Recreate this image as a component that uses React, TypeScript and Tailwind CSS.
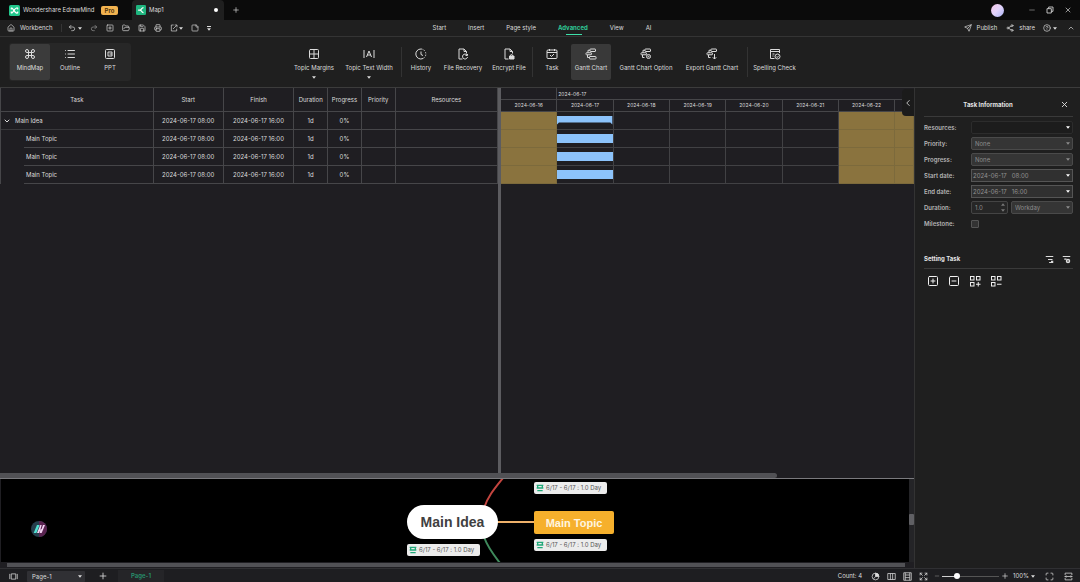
import { useState } from "react";
import type { ReactNode } from "react";
import {
    ChevronDown, ChevronLeft, ChevronUp, CircleHelp, Expand,
    FolderOpen, Grid2x2, Home, List, Maximize, Minus, Plus, Printer,
    Redo2, Save, Send, Share2, SquarePlus, SquareMinus, StickyNote,
    Undo2, X, Command,
} from "lucide-react";

const Caret = ({ className = "" }: { className?: string }) => (
    <svg viewBox="0 0 6 4" className={`h-[3px] w-1 shrink-0 ${className}`} aria-hidden="true">
        <path d="M0 0h6L3 4z" fill="currentColor" />
    </svg>
);

const Glyph = ({ children, className = "size-3" }: { children: ReactNode; className?: string }) => (
    <svg viewBox="0 0 24 24" className={`shrink-0 ${className}`} fill="none" stroke="currentColor" strokeWidth="2" aria-hidden="true">
        {children}
    </svg>
);

const GanttIcon = ({ extra }: { extra: ReactNode }) => (
    <Glyph>
        <rect x="10" y="2" width="11" height="5" rx="1" />
        <path d="M10 4.500H6v5" />
        <rect x="2" y="9.500" width="11" height="4" rx="1" />
        <path d="M5 14v5h4" />
        {extra}
    </Glyph>
);

const LogoMark = () => (
    <svg viewBox="0 0 24 24" className="size-[11px] shrink-0" aria-hidden="true">
        <rect width="24" height="24" rx="4" fill="#22c78c" />
        <path d="M5 6c5 0 5 12 14 12M5 18c5 0 5-12 14-12M5 6v4M19 6v4M5 14v4M19 14v4" fill="none" stroke="#fff" strokeWidth="2.500" />
    </svg>
);

const MapMark = () => (
    <svg viewBox="0 0 24 24" className="size-2.5 shrink-0" aria-hidden="true">
        <rect width="24" height="24" rx="3" fill="#1fb57f" />
        <path d="M5 12h4m9-6c-6 0-3 6-9 6 6 0 3 6 9 6" fill="none" stroke="#fff" strokeWidth="3" />
    </svg>
);

const TitleBar = () => (
    <header className="flex h-5 shrink-0 items-center bg-[#0b0b0b]">
        <div className="flex w-[132px] items-center pl-[9px]">
            <LogoMark />
            <span className="ml-[3px]">Wondershare EdrawMind</span>
            <span className="ml-1.5 rounded-[2px] bg-[#f2b350] px-1 leading-[9px] font-semibold text-[#4a3008]">Pro</span>
        </div>
        <div className="flex h-full w-[92px] items-center gap-[3px] rounded-t bg-[#1f1f1f] pr-1.5 pl-1">
            <MapMark />
            <span>Map1</span>
            <span className="ml-auto size-1 rounded-full bg-white" />
        </div>
        <button aria-label="New tab" className="ml-2"><Plus className="size-2" /></button>
        <div className="ml-auto flex items-center gap-2.5 pr-2">
            <span className="mr-3.5 size-[13px] rounded-full bg-linear-to-br from-[#f7c8e8] via-[#e2d3fb] to-[#a9b4f4]" />
            <button aria-label="Minimize"><Minus className="size-2 text-[#9a9a9a]" /></button>
            <button aria-label="Restore"><Glyph className="size-2"><path d="M3 8h13v13H3zM8 8V3h13v13h-5" strokeWidth="2.500" /></Glyph></button>
            <button aria-label="Close"><X className="size-2" /></button>
        </div>
    </header>
);

const tabs = ["Start", "Insert", "Page style", "Advanced", "View", "AI"];

const MenuBar = () => (
    <div className="grid h-[17px] shrink-0 grid-cols-[1fr_auto_1fr] items-center border-b border-[#343434] bg-[#1f1f1f]">
        <div className="flex items-center pl-[7px]">
            <button className="mr-2 flex items-center gap-[5px]"><Home className="size-2" />Workbench</button>
            <span className="mr-1.5 h-2 w-px bg-[#353535]" />
            <div className="flex items-center gap-2">
                <button aria-label="Undo" className="flex items-center gap-0.5"><Undo2 className="size-2" /><Caret /></button>
                <button aria-label="Redo" className="text-[#999]"><Redo2 className="size-2" /></button>
                <button aria-label="New"><SquarePlus className="size-2" /></button>
                <button aria-label="Open"><FolderOpen className="size-2" /></button>
                <button aria-label="Save"><Save className="size-2" /></button>
                <button aria-label="Print"><Printer className="size-2" /></button>
                <button aria-label="Export" className="flex items-center gap-px">
                    <Glyph className="size-2"><path d="M11 3H4v18h16v-7M9 15 20 4M14 3h7v7" /></Glyph>
                    <Caret />
                </button>
                <button aria-label="Note"><StickyNote className="size-2" /></button>
                <button aria-label="More" className="flex flex-col items-center gap-px"><span className="h-px w-1 bg-current" /><Caret /></button>
            </div>
        </div>
        <nav className="flex h-full items-center gap-[22px] pl-1">
            {tabs.map((tab) => (
                <button
                    key={tab}
                    className={tab === "Advanced" ? "relative font-bold text-[#2fc795]" : ""}
                >
                    {tab}
                    {tab === "Advanced" && <span className="absolute top-[10px] left-2 h-px w-4 bg-[#3ee0aa]" />}
                </button>
            ))}
        </nav>
        <div className="flex items-center justify-end pr-[5px]">
            <button className="mr-[9px] flex items-center gap-[5px]"><Send className="size-2" />Publish</button>
            <button className="mr-2 flex items-center gap-[5px]"><Share2 className="size-2" />share</button>
            <button aria-label="Help" className="mr-2.5 flex items-center gap-0.5"><CircleHelp className="size-2" /><Caret /></button>
            <button aria-label="Collapse ribbon"><ChevronUp className="size-2" /></button>
        </div>
    </div>
);

type toolProps = {
    label: string;
    icon: ReactNode;
    className: string;
    caret?: boolean;
}
const Tool = ({ label, icon, className, caret }: toolProps) => (
    <button className={`flex h-9 shrink-0 flex-col items-center rounded-[2px] pt-1 whitespace-nowrap ${className}`}>
        {icon}
        <span className="mt-1">{label}</span>
        {caret && <Caret className="mt-1" />}
    </button>
);

const Divider = () => <span className="mx-1 h-[30px] w-px bg-[#333]" />;

const Ribbon = () => (
    <div className="grid h-[51px] shrink-0 grid-cols-[1fr_auto_1fr] items-center border-b border-[#3c3c3c] bg-[#1f1f1f]">
        <div className="ml-[9px] flex w-[122px] rounded-[3px] bg-[#272727] p-px">
            <Tool label="MindMap" className="w-10 bg-[#3b3b3b]" icon={<Command className="size-3" />} />
            <Tool label="Outline" className="w-10" icon={<List className="size-3" />} />
            <Tool
                label="PPT"
                className="w-10"
                icon={<Glyph><rect x="3" y="3" width="18" height="18" rx="2" /><path d="M8 8h8v8H8zM11 12h5" /></Glyph>}
            />
        </div>
        <div className="flex items-center pl-1">
            <Tool caret label="Topic Margins" className="w-[54px]" icon={<Grid2x2 className="size-3" />} />
            <Tool
                caret
                label="Topic Text Width"
                className="w-14"
                icon={<Glyph><path d="M2 4v16M22 4v16M7 18 12 6l5 12M8.500 14h7" /></Glyph>}
            />
            <Divider />
            <Tool
                label="History"
                className="w-[30px]"
                icon={
                    <Glyph>
                        <path d="M12 2a10 10 0 1 0 4 19" />
                        <path d="M12 2a10 10 0 0 1 4 19" strokeDasharray="3 2.500" />
                        <path d="M12 7v6l4 2" />
                    </Glyph>
                }
            />
            <Tool
                label="File Recovery"
                className="w-[54px]"
                icon={<Glyph><path d="M11 22H4V2h10l5 5v4M14 2v5h5M20 14a5 5 0 1 0 1 4M21 12v3h-4" /></Glyph>}
            />
            <Tool
                label="Encrypt File"
                className="w-[38px]"
                icon={<Glyph><path d="M11 22H4V2h10l5 5v4M14 2v5h5M15 16v-1a2 2 0 0 1 4 0v1" /><path d="M13 16h9v6h-9z" fill="currentColor" /></Glyph>}
            />
            <Divider />
            <Tool
                label="Task"
                className="w-[30px]"
                icon={<Glyph><rect x="2" y="4" width="20" height="17" rx="2" /><path d="M2 9h20M7 2v4M17 2v4M8 14l3 3 5-5" /></Glyph>}
            />
            <Tool
                label="Gantt Chart"
                className="mr-0.5 ml-1 w-10 bg-[#393939]"
                icon={<GanttIcon extra={<rect x="9" y="17" width="13" height="5" rx="1" />} />}
            />
            <Tool
                label="Gantt Chart Option"
                className="w-[66px]"
                icon={<GanttIcon extra={<><circle cx="17" cy="17" r="4" /><circle cx="17" cy="17" r="1" /></>} />}
            />
            <Tool
                label="Export Gantt Chart"
                className="ml-0.5 w-[62px]"
                icon={<GanttIcon extra={<path d="M17 12v10M13.500 18.500 17 22l3.500-3.500" />} />}
            />
            <Divider />
            <Tool
                label="Spelling Check"
                className="w-[45px]"
                icon={<Glyph><path d="M21 10V3H3v18h8M3 7h18M7 12h4M7 16h2" /><circle cx="17" cy="17" r="5" /><path d="m14.500 17 2 2 3-3.500" /></Glyph>}
            />
        </div>
    </div>
);

interface Task {
    name: string;
    start: string;
    finish: string;
    duration: string;
    progress: string;
}

const tasks: Task[] = ["Main Idea", "Main Topic", "Main Topic", "Main Topic"].map((name) => ({
    name,
    start: "2024-06-17 08:00",
    finish: "2024-06-17 16:00",
    duration: "1d",
    progress: "0%",
}));

const cell = "border-r border-b border-[#464649] text-center font-normal";

const TaskTable = () => (
    <table className="w-full table-fixed border-separate border-spacing-0 border-l border-[#464649]">
        <colgroup>
            <col />
            <col className="w-[14.1%]" />
            <col className="w-[14.2%]" />
            <col className="w-[6.8%]" />
            <col className="w-[6.8%]" />
            <col className="w-[6.8%]" />
            <col className="w-[20.6%]" />
        </colgroup>
        <thead>
            <tr className="h-6">
                {["Task", "Start", "Finish", "Duration", "Progress", "Priority", "Resources"].map((head) => (
                    <th key={head} className={cell}>{head}</th>
                ))}
            </tr>
        </thead>
        <tbody>
            {tasks.map((task, i) => (
                <tr key={i} className="h-[18px]">
                    <td className="border-r border-[#464649]">
                        {i === 0 ? (
                            <div className="flex h-[18px] items-center gap-1 border-b border-[#38383b] pl-0.5">
                                <ChevronDown className="size-2" strokeWidth={3} />
                                {task.name}
                            </div>
                        ) : (
                            <div className="ml-[23px] flex h-[18px] items-center border-b border-[#464649] pl-0.5">{task.name}</div>
                        )}
                    </td>
                    <td className={cell}>{task.start}</td>
                    <td className={cell}>{task.finish}</td>
                    <td className={cell}>{task.duration}</td>
                    <td className={cell}>{task.progress}</td>
                    <td className={cell}></td>
                    <td className={cell}></td>
                </tr>
            ))}
        </tbody>
    </table>
);

const days = ["2024-06-16", "2024-06-17", "2024-06-18", "2024-06-19", "2024-06-20", "2024-06-21", "2024-06-22", ""];
const dayGrid = "grid grid-cols-[repeat(7,3fr)_1fr]";

const GanttChart = () => (
    <div>
        <div className={`${dayGrid} h-3 border-b border-[#464649] text-[5px] leading-3`}>
            <span className="border-r border-[#464649]" />
            <span className="pl-px">2024-06-17</span>
        </div>
        <div className={`${dayGrid} h-3 text-[5px] leading-[11px]`}>
            {days.map((day, i) => (
                <span key={i} className="border-r border-b border-[#464649] text-center">{day}</span>
            ))}
        </div>
        {tasks.map((task, row) => (
            <div key={row} className={`${dayGrid} h-[18px]`}>
                {days.map((day, i) => {
                    if (i === 0 || i > 5) {
                        return <span key={i} className="border-r border-b border-[#7c6a3c] bg-[#8a733e]" />;
                    }
                    return (
                        <span key={i} className="border-r border-b border-[#414144] pt-1">
                            {i === 1 && row === 0 && (
                                <svg viewBox="0 0 56 9" preserveAspectRatio="none" className="block h-[9px] w-full">
                                    <path d="M0 0h56v8.500l-2-2H2l-2 2z" fill="#8cc3fb" />
                                </svg>
                            )}
                            {i === 1 && row > 0 && <span className="block h-[9px] bg-[#8cc3fb]" />}
                        </span>
                    );
                })}
            </div>
        ))}
    </div>
);

const DateTag = ({ className }: { className: string }) => (
    <div className={`absolute flex h-3 w-[73px] items-center gap-0.5 rounded-[2px] bg-[#ececec] pl-0.5 whitespace-nowrap text-[#555] ${className}`}>
        <Glyph className="size-2 text-[#20a878]">
            <path d="M2 4h20M2 12h20M4 20h16M5 4v8M19 4v8" strokeWidth="4" />
        </Glyph>
        6/17 - 6/17 : 1.0 Day
    </div>
);

const MindMap = () => (
    <div className="relative h-[83px] min-w-0 flex-1 overflow-hidden bg-black">
        <svg className="absolute top-0 left-[480px] h-[83px] w-14" viewBox="0 0 56 83" fill="none">
            <path d="M3 29C7 17 14 9 22 -1" stroke="#c4453f" strokeWidth="2" />
            <path d="M16 43H54" stroke="#eeb06a" strokeWidth="2" />
            <path d="M3 58C7 69 12 75 19 84" stroke="#3f8a5c" strokeWidth="2" />
        </svg>
        <svg className="absolute top-[42px] left-[30px] size-4" viewBox="0 0 24 24">
            <circle cx="12" cy="12" r="12" fill="#263f4d" />
            <path d="M12 0a12 12 0 0 1 0 24z" fill="#5a2350" />
            <path d="M4 18 9 6h4L8 18z" fill="#52e2d2" />
            <path d="m9 18 5-12h2l-2 7 2-1 2-6h3l-5 12h-3l1-5-2 5z" fill="#f3d7f5" />
        </svg>
        <div className="absolute top-[26px] left-[406px] flex h-[34px] w-[91px] items-center justify-center rounded-full bg-white text-[14px] font-bold text-[#404040] [font-family:'Liberation_Sans',sans-serif]">
            Main Idea
        </div>
        <div className="absolute top-8 left-[533px] flex h-[23px] w-20 items-center justify-center rounded-[2px] bg-[#f6b02c] text-[11px] font-bold text-[#fff6e0] [font-family:'Liberation_Sans',sans-serif]">
            Main Topic
        </div>
        <DateTag className="top-[3px] left-[533px]" />
        <DateTag className="top-[60px] left-[533px]" />
        <DateTag className="top-[65px] left-[406px]" />
    </div>
);

const field = "h-[13px] w-full min-w-0 appearance-none rounded-[2px] border pl-[3px] leading-[11px]";

type selectProps = {
    id: string;
    options: string[];
    className: string;
    caret?: string;
}
const SelectField = ({ id, options, className, caret = "text-[#8d8d8d]" }: selectProps) => (
    <div className="relative min-w-0 flex-1">
        <select id={id} aria-label={id} className={`${field} block ${className}`}>
            {options.map((option) => <option key={option}>{option}</option>)}
        </select>
        <Caret className={`pointer-events-none absolute top-[5px] right-[3px] ${caret}`} />
    </div>
);

const DateField = ({ id, value }: { id: string; value: string }) => {
    const [date, setDate] = useState(value);

    return (
        <div className="relative min-w-0 flex-1">
            <input
                type="text"
                id={id}
                value={date}
                onChange={(e) => setDate(e.target.value)}
                className={`${field} block rounded-none border-[#555] bg-[#303030] pl-px whitespace-pre text-[#909090]`}
            />
            <button aria-label="Pick date" className="absolute top-[5px] right-[3px]"><Caret className="block text-white" /></button>
        </div>
    );
}

const Row = ({ label, htmlFor, children }: { label: string; htmlFor: string; children: ReactNode }) => (
    <div className="flex h-[13px] items-center">
        <label htmlFor={htmlFor} className="w-[47px] shrink-0 font-semibold text-[#b5b5b5]">{label}</label>
        {children}
    </div>
);

const disabledField = "border-[#4a4a4a] bg-[#353535] text-[#8d8d8d]";

const TaskPanel = () => (
    <aside className="w-[166px] shrink-0 border-l border-[#333] bg-[#1f1f1f] pr-[7px] pl-[9px]">
        <div className="flex h-[29px] items-center border-b border-[#3a3a3a] pt-[5px]">
            <h2 className="flex-1 pr-2 text-center font-bold text-[#e4e4e4]">Task Information</h2>
            <button aria-label="Close panel" className="mr-1"><X className="size-[9px]" strokeWidth={2.5} /></button>
        </div>
        <div className="mt-1 flex flex-col gap-[3px]">
            <Row label="Resources:" htmlFor="resources"><SelectField id="resources" options={[""]} className="border-[#2c2c2c] bg-[#1c1c1c]" caret="text-white" /></Row>
            <Row label="Priority:" htmlFor="priority"><SelectField id="priority" options={["None"]} className={disabledField} /></Row>
            <Row label="Progress:" htmlFor="progress"><SelectField id="progress" options={["None"]} className={disabledField} /></Row>
            <Row label="Start date:" htmlFor="start"><DateField id="start" value={"2024-06-17   08:00"} /></Row>
            <Row label="End date:" htmlFor="end"><DateField id="end" value={"2024-06-17   16:00"} /></Row>
            <Row label="Duration:" htmlFor="duration">
                <div className="relative mr-[3px] w-[37px] shrink-0">
                    <input type="text" id="duration" defaultValue="1.0" className={`${field} block border-[#444] bg-[#262626] text-[#8d8d8d]`} />
                    <span className="absolute top-0.5 right-[3px] flex flex-col gap-[3px] text-[#777]">
                        <button aria-label="Increase"><Caret className="block rotate-180" /></button>
                        <button aria-label="Decrease"><Caret className="block" /></button>
                    </span>
                </div>
                <SelectField id="unit" options={["Workday"]} className={disabledField} />
            </Row>
            <Row label="Milestone:" htmlFor="milestone">
                <input type="checkbox" id="milestone" className="size-2 appearance-none rounded-[1px] border border-[#555] bg-[#333]" />
            </Row>
        </div>
        <div className="mt-[22px] flex h-[17px] items-center gap-2 border-b border-[#3a3a3a] pb-0.5">
            <h2 className="mr-auto font-bold text-[#e4e4e4]">Setting Task</h2>
            <button aria-label="Task list"><Glyph className="size-[9px]"><path d="M2 4h20M8 12h12M11 20h11M16 17h6" strokeWidth="3" /></Glyph></button>
            <button aria-label="Task options"><Glyph className="mr-0.5 size-[9px]"><path d="M2 4h20M6 11h6" strokeWidth="3" /><circle cx="16" cy="16" r="4" strokeWidth="4" /></Glyph></button>
        </div>
        <div className="mt-1.5 flex items-center gap-[9px] pl-[3px] text-[#f0f0f0]">
            <button aria-label="Add task"><SquarePlus className="size-3" /></button>
            <button aria-label="Remove task"><SquareMinus className="size-3" /></button>
            <button aria-label="Expand tasks">
                <Glyph><rect x="3" y="3" width="7" height="7" /><rect x="15" y="3" width="7" height="7" /><rect x="3" y="15" width="7" height="7" /><path d="M18.500 14v9M14 18.500h9" /></Glyph>
            </button>
            <button aria-label="Collapse tasks">
                <Glyph><rect x="3" y="3" width="7" height="7" /><rect x="15" y="3" width="7" height="7" /><rect x="3" y="15" width="7" height="7" /><path d="M14 18.500h9" /></Glyph>
            </button>
        </div>
    </aside>
);

const StatusBar = () => (
    <footer className="flex h-[14px] shrink-0 items-center border-t border-[#303033] bg-[#1e1e21] pt-px pr-[7px] pl-[9px]">
        <button aria-label="Pages" className="mr-[9px]">
            <Glyph className="size-[9px]"><path d="M6 5h12v14H6zM2 5v14M22 5v14" /></Glyph>
        </button>
        <div className="relative h-[11px] w-[58px]">
            <select aria-label="Page" className="block h-[11px] w-full appearance-none rounded-[1px] bg-[#303034] pl-[5px] leading-[11px]">
                <option>Page-1</option>
            </select>
            <Caret className="pointer-events-none absolute top-1 right-[3px]" />
        </div>
        <button aria-label="Add page" className="ml-[13px]"><Plus className="size-2.5" /></button>
        <button className="ml-2.5 h-[12px] w-[46px] bg-[#252528] font-semibold text-[#27916d]">Page-1</button>
        <span className="mr-[9px] ml-auto">Count: 4</span>
        <div className="flex items-center gap-[7px]">
            <button aria-label="Theme"><Glyph className="size-[9px]"><circle cx="12" cy="12" r="9" /><path d="M12 3v9h9a9 9 0 0 0-9-9zM12 12l-5 6" fill="currentColor" /></Glyph></button>
            <button aria-label="Columns"><Glyph className="size-[9px]"><path d="M2 4h20v16H2zM9 4v16M15 4v16" /></Glyph></button>
            <button aria-label="Layout"><Glyph className="size-[9px]"><path d="M2 2h20v20H2zM6 2v20M18 2v20M6 8h12M6 15h12" /></Glyph></button>
            <button aria-label="Fit map"><Expand className="size-[9px]" /></button>
        </div>
        <button aria-label="Zoom out" className="ml-1.5"><Minus className="size-1.5 text-[#999]" /></button>
        <input
            type="range"
            aria-label="Zoom"
            defaultValue={23}
            className="mx-0.5 h-1.5 w-[57px] appearance-none bg-[linear-gradient(90deg,#d0d0d0_25%,#555_25%)] bg-[length:100%_1px] bg-center bg-no-repeat [&::-webkit-slider-thumb]:size-1.5 [&::-webkit-slider-thumb]:appearance-none [&::-webkit-slider-thumb]:rounded-full [&::-webkit-slider-thumb]:bg-white"
        />
        <button aria-label="Zoom in"><Plus className="size-2" /></button>
        <button className="ml-1 flex items-center gap-0.5">100%<Caret /></button>
        <button aria-label="Full screen" className="ml-2.5"><Maximize className="size-[9px]" /></button>
        <button aria-label="Fit width" className="ml-2.5"><Glyph className="size-[9px]"><path d="M3 8V3h18v5M3 16v5h18v-5M2 12h20M6 9l-3 3 3 3M18 9l3 3-3 3" /></Glyph></button>
    </footer>
);

export default function App() {
    return (
        <div className="flex h-screen flex-col overflow-hidden bg-[#1f1f1f] text-[6px] leading-2 whitespace-nowrap text-[#dcdcdc] [font-family:Inter,'Open_Sans',sans-serif]">
            <TitleBar />
            <MenuBar />
            <Ribbon />
            <main className="flex min-h-0 flex-1">
                <section className="relative flex min-w-0 flex-1 flex-col bg-[#1f1e22]">
                    <div className="flex min-h-0 flex-1">
                        <div className="min-w-0 flex-[498]"><TaskTable /></div>
                        <div className="w-[3px] shrink-0 bg-[#5c5c60]" />
                        <div className="min-w-0 flex-[413]"><GanttChart /></div>
                    </div>
                    <button aria-label="Collapse panel" className="absolute top-[1px] right-0 flex h-[27px] w-3 items-center justify-center rounded-l bg-[#1b1b1b]">
                        <ChevronLeft className="size-2.5" />
                    </button>
                    <div className="h-1.5 shrink-0 border-b border-[#7a7a7e]">
                        <div className="h-[5px] w-[85%] rounded-r bg-[#515155]" />
                    </div>
                    <div className="flex shrink-0 pl-px">
                        <MindMap />
                        <div className="flex w-[5px] flex-col bg-[#242427] pt-[35px]">
                            <div className="h-[11px] rounded-[1px] bg-[#606064]" />
                        </div>
                    </div>
                    <div className="h-1.5 shrink-0 pt-px pr-[9px] pl-[7px]">
                        <div className="h-1 bg-[#515155]" />
                    </div>
                </section>
                <TaskPanel />
            </main>
            <StatusBar />
        </div>
    );
}
